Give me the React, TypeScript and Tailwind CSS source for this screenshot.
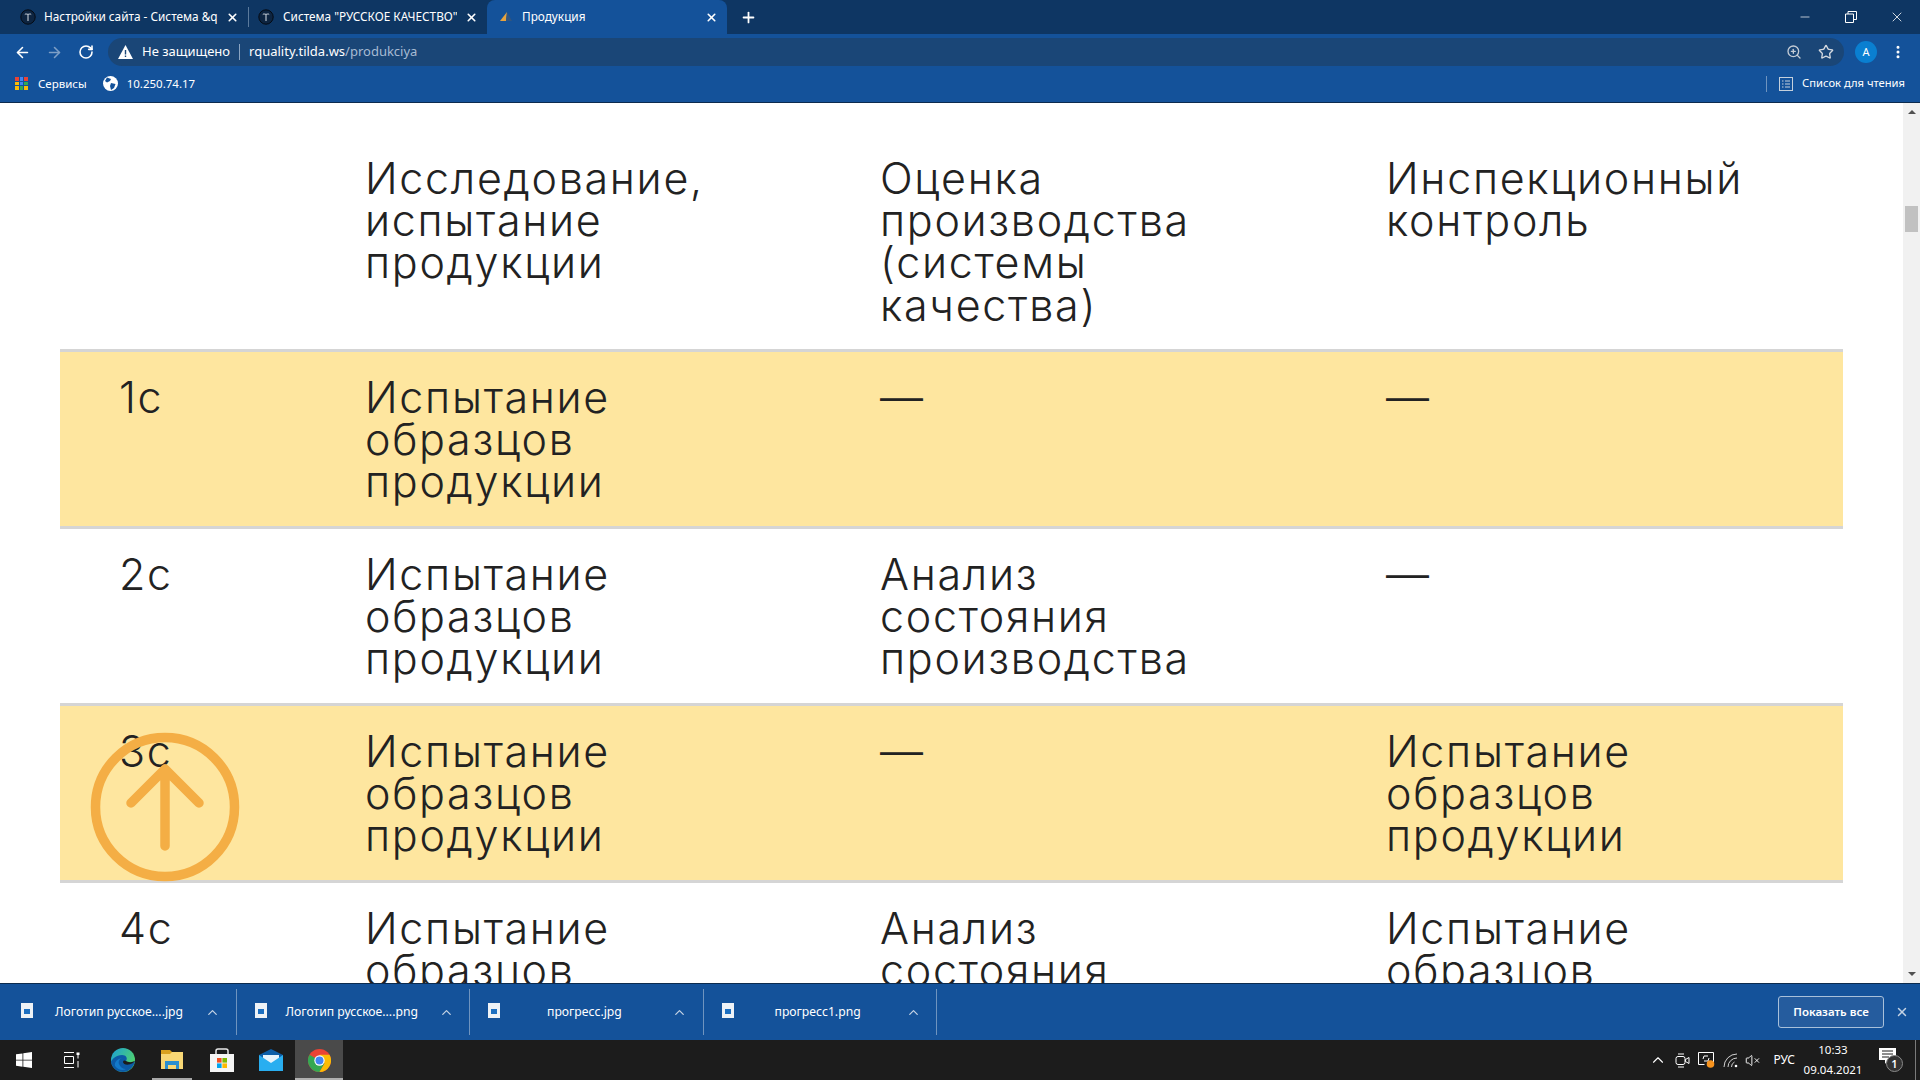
import { ArrowLeft, ArrowRight, RotateCw, ZoomIn, Star, EllipsisVertical, X, Plus, Minus, ChevronUp, VolumeX } from "lucide-react";

const rows = [
  { id: "1c", a: "Испытание образцов продукции", b: "—", c: "—", yellow: true },
  { id: "2c", a: "Испытание образцов продукции", b: "Анализ состояния производства", c: "—", yellow: false },
  { id: "3c", a: "Испытание образцов продукции", b: "—", c: "Испытание образцов продукции", yellow: true },
  { id: "4c", a: "Испытание образцов продукции", b: "Анализ состояния производства", c: "Испытание образцов продукции", yellow: false },
];

const downloads = [
  { name: "Логотип русское....jpg", pad: "pl-[22px]" },
  { name: "Логотип русское....png", pad: "pl-[19px]" },
  { name: "прогресс.jpg", pad: "pl-[47px]" },
  { name: "прогресс1.png", pad: "pl-[41px]" },
];

function TildaIcon() {
  return (
    <svg width="16" height="16" viewBox="0 0 16 16" className="shrink-0">
      <circle cx="8" cy="8" r="7.2" fill="#0d2440" stroke="#050b14" strokeWidth="1" />
      <path d="M4.8 5.5c1-1 2-.2 3.200-.2s2.200-.8 3.200.2M8 5.500V12" stroke="#d7dde5" strokeWidth="1" fill="none" />
    </svg>
  );
}

function Tab({ title, className, titleClass, icon }: { title: string; className: string; titleClass: string; icon: React.ReactNode }) {
  return (
    <div className={`flex items-center h-[34px] shrink-0 ${className}`}>
      {icon}
      <span className={`flex-1 overflow-hidden whitespace-nowrap text-[11.800px] text-white ${titleClass}`}>{title}</span>
      <X className="w-[13px] h-[13px] ml-2 text-white shrink-0" strokeWidth={3} />
    </div>
  );
}

function AppsIcon() {
  const colors = ["#ea4335", "#4285f4", "#ea4335", "#fbbc05", "#4285f4", "#34a853", "#fbbc05", "#34a853", "#fbbc05"];
  return (
    <div className="grid grid-cols-3 gap-[1px] w-[13px] h-[13px]">
      {colors.map((c, i) => (
        <div key={i} style={{ backgroundColor: c }} />
      ))}
    </div>
  );
}

function DownloadItem({ name, pad }: { name: string; pad: string }) {
  return (
    <div className="flex items-center w-[233.500px] h-[46px] pl-[18px] border-r border-[#6f94bf] shrink-0">
      <div className="relative w-[12px] h-[15px] bg-[#eef2f6] -mt-[4px] shrink-0">
        <div className="absolute left-[3px] top-[6px] w-[6px] h-[5px] bg-[#1d6fc0]" />
      </div>
      <span className={`${pad} w-[167px] text-[12.200px] text-white whitespace-nowrap shrink-0`}>{name}</span>
      <ChevronUp className="ml-[5px] w-[15px] h-[15px] text-[#c5d3e4]" strokeWidth={2} />
    </div>
  );
}

export default function App() {
  return (
    <div className="flex flex-col h-screen overflow-hidden bg-white font-['Noto_Sans',sans-serif]">
      {/* tabs */}
      <div className="flex items-center h-[34px] bg-[#0e3663] shrink-0">
        <Tab title="Настройки сайта - Система &qu" className="w-[248px] pl-[20px] pr-[9px]" titleClass="ml-[8px]" icon={<TildaIcon />} />
        <div className="w-px h-[20px] bg-[#5b7a9c] shrink-0" />
        <Tab title={'Система "РУССКОЕ КАЧЕСТВО" -'} className="w-[238px] pl-[9px] pr-[9px]" titleClass="ml-[9px]" icon={<TildaIcon />} />
        <Tab
          title="Продукция"
          className="w-[240px] bg-[#14529a] rounded-t-lg pl-[11px] pr-[9px]"
          titleClass="ml-[8px]"
          icon={
            <svg width="16" height="16" viewBox="0 0 16 16" className="shrink-0">
              <path d="M9 3l-7 9h6z" fill="#e8a33d" />
              <path d="M9 3l5 9H8z" fill="#33557f" />
            </svg>
          }
        />
        <Plus className="ml-[13px] w-[17px] h-[17px] text-white" strokeWidth={2.5} />
        <div className="flex items-center ml-auto text-white">
          <Minus className="w-[14px] h-[14px] mr-[33px]" strokeWidth={1.2} />
          <svg width="12" height="12" viewBox="0 0 12 12" className="mr-[32px]" fill="none" stroke="white">
            <path d="M.5 3h8v8.500h-8zM3 3V.5h8.500v8H8.500" />
          </svg>
          <X className="w-[16px] h-[16px] mr-[15px]" strokeWidth={1.2} />
        </div>
      </div>

      {/* toolbar */}
      <div className="flex items-center h-[36px] bg-[#14529a] shrink-0">
        <ArrowLeft className="ml-[14px] w-[17px] h-[17px] text-white" strokeWidth={2.200} />
        <ArrowRight className="ml-[15px] w-[17px] h-[17px] text-[#7e9fc6]" strokeWidth={2.200} />
        <RotateCw className="ml-[15px] w-[16px] h-[16px] text-white" strokeWidth={2.400} />
        <div className="flex items-center ml-[14px] w-[1736px] h-[28px] rounded-full bg-[#1a4677] text-[13px]">
          <svg width="15" height="14" viewBox="0 0 15 14" className="ml-[10px] shrink-0">
            <path d="M7.500 0L15 14H0z" fill="white" />
            <path d="M6.800 5h1.400v4.500H6.800zM6.800 10.500h1.400V12H6.800z" fill="#1a4677" />
          </svg>
          <span className="ml-[9px] text-white">Не защищено</span>
          <div className="mx-[9px] w-px h-[16px] bg-[#8aa4c2]" />
          <span className="text-white">rquality.tilda.ws</span>
          <span className="text-[#a7bbd3]">/produkciya</span>
          <ZoomIn className="ml-auto w-[16px] h-[16px] text-[#c4ccd6]" />
          <Star className="ml-[16px] mr-[10px] w-[16px] h-[16px] text-[#d4d9df]" strokeWidth={2} />
        </div>
        <div className="flex items-center justify-center ml-[11px] w-[22px] h-[22px] rounded-full bg-[#0a7fd1] text-white text-[11px]">A</div>
        <EllipsisVertical className="ml-[13px] w-[16px] h-[16px] text-white" strokeWidth={2.500} />
      </div>

      {/* bookmarks */}
      <div className="flex items-center h-[33px] pb-[5px] bg-[#14529a] border-b border-[#0c2b4e] shrink-0 text-[11.500px] text-white">
        <div className="ml-[15px]"><AppsIcon /></div>
        <span className="ml-[10px]">Сервисы</span>
        <svg width="15" height="15" viewBox="0 0 15 15" className="ml-[16px]">
          <circle cx="7.500" cy="7.500" r="7.500" fill="white" />
          <path d="M4 1.500l4 1.500-1 2-3 1.500L2 5zM8 7l4.500 1-1.500 4-3 2-1-4z" fill="#14529a" />
        </svg>
        <span className="ml-[9px]">10.250.74.17</span>
        <div className="ml-auto w-px h-[16px] bg-[#6f94bf]" />
        <svg width="14" height="14" viewBox="0 0 14 14" className="ml-[12px]" fill="none" stroke="#c5d0dc">
          <rect x=".5" y=".5" width="13" height="13" />
          <path d="M3 4h1.500M6 4h5M3 7h1.500M6 7h5M3 10h1.500M6 10h5" />
        </svg>
        <span className="ml-[9px] mr-[15px] text-[11.200px]">Список для чтения</span>
      </div>

      {/* page */}
      <div className="relative flex flex-1 min-h-0 overflow-hidden">
        <div className="flex-1 min-w-0 overflow-hidden pl-[60px] pr-[60px] font-['Inter',sans-serif] text-[43px] leading-[42.200px] font-light text-[#222222] tracking-[1.700px]">
          <div className="grid grid-cols-[305px_515px_506px_1fr] pt-[54px] h-[246px]">
            <div />
            <div className="w-[400px]">Исследование, испытание продукции</div>
            <div className="w-[340px]">Оценка производства (системы качества)</div>
            <div className="w-[400px]">Инспекционный контроль</div>
          </div>
          {rows.map((r) => (
            <div
              key={r.id}
              className={`grid grid-cols-[305px_515px_506px_1fr] h-[177px] pt-[24px] border-t-[3px] border-[#d5d5d5] ${r.yellow ? "bg-[#fee69f]" : ""}`}
            >
              <div className="pl-[59px]">{r.id}</div>
              <div className="w-[340px]">{r.a}</div>
              <div className="w-[340px]">{r.b}</div>
              <div className="w-[340px]">{r.c}</div>
            </div>
          ))}
        </div>

        {/* scrollbar */}
        <div className="relative w-[17px] bg-[#f1f1f1] shrink-0 flex flex-col items-center">
          <div className="mt-[7px] w-0 h-0 border-x-[4px] border-x-transparent border-b-[4px] border-b-[#505050]" />
          <div className="mt-[92px] w-[13px] h-[26px] bg-[#c1c1c1]" />
          <div className="mt-auto mb-[7px] w-0 h-0 border-x-[4px] border-x-transparent border-t-[4px] border-t-[#505050]" />
        </div>

        {/* scroll to top button */}
        <svg width="150" height="150" viewBox="0 0 150 150" className="absolute left-[90px] top-[629px]" fill="none" stroke="#f4ae45" strokeWidth="9.500" strokeLinecap="round" strokeLinejoin="round">
          <circle cx="75" cy="75" r="69.500" />
          <path d="M75 114V37M41 71l34-34 34 34" />
        </svg>
      </div>

      {/* downloads */}
      <div className="flex items-center h-[57px] bg-[#14529a] border-t border-[#0c2b4e] shrink-0 pr-[11px]">
        <div className="flex ml-[3px]">
          {downloads.map((d) => (
            <DownloadItem key={d.name} name={d.name} pad={d.pad} />
          ))}
        </div>
        <div className="flex items-center justify-center ml-auto w-[106px] h-[32px] rounded-[3px] border border-[#a8c0da] bg-[#255c9e] text-[11.500px] font-semibold text-white">Показать все</div>
        <X className="ml-[11px] w-[14px] h-[14px] text-[#c5d3e4]" strokeWidth={2.500} />
      </div>

      {/* taskbar */}
      <div className="flex items-center h-[40px] bg-[#1c1c1c] shrink-0 text-white">
        <svg width="16" height="16" viewBox="0 0 16 16" fill="white" className="ml-[16px]">
          <path d="M0 2.300l6.500-.9v6.300H0zM7.300 1.300L16 0v7.700H7.300zM0 8.400h6.500v6.300L0 13.800zM7.300 8.400H16V16l-8.700-1.200z" />
        </svg>
        <svg width="16" height="16" viewBox="0 0 16 16" fill="none" stroke="white" className="ml-[32px]">
          <path d="M0 .5h10M0 15.500h10M.5 4.500h9v7h-9zM14 3v3.500M14 9v6.500" />
          <rect x="12.500" y=".5" width="3" height="2.500" fill="white" stroke="none" />
        </svg>
        <div className="ml-[19px] w-[48px] h-[40px] flex items-center justify-center">
          <svg width="24" height="24" viewBox="0 0 24 24">
            <defs>
              <linearGradient id="edgeTop" x1="0" y1="0" x2="1" y2="0.600">
                <stop offset="0" stopColor="#1a9fd8" />
                <stop offset="1" stopColor="#52d46a" />
              </linearGradient>
            </defs>
            <circle cx="12" cy="12" r="12" fill="url(#edgeTop)" />
            <path d="M24 13c-3 2-7 2-9 0 2-3 0-6-4-6C5 7 1 11 0 14c1 6 6 10 12 10 6 0 11-5 12-11z" fill="#0c5aa6" />
            <path d="M12 10c-3 0-5 3-4 6 1 3 4 5 7 5-3 2-8 1-11-3-1-4 3-8 8-8z" fill="#1379c9" />
            <path d="M15 13c-1.500-1-3-.5-3 1 0 2 3 3 6 2.500 2.500-.5 5-2 6-3.500-3 1.500-7 1.500-9 0z" fill="#1c1c1c" />
          </svg>
        </div>
        <div className="relative w-[50px] h-[40px] flex items-center justify-center">
          <svg width="22" height="20" viewBox="0 0 22 20">
            <path d="M0 0h9l2 2h11v17H0z" fill="#d9a11f" />
            <path d="M0 4h9l2-2h11v17H0z" fill="#f8d775" />
            <path d="M4 11h14v8h-3v-4H7v4H4z" fill="#2a8fd0" />
          </svg>
          <div className="absolute bottom-0 left-[5px] w-[40px] h-[2px] bg-[#a8a8a8]" />
        </div>
        <div className="w-[49px] h-[40px] flex items-center justify-center">
          <svg width="24" height="24" viewBox="0 0 24 24">
            <path d="M6 7V3q0-2 2-2h8q2 0 2 2v4" fill="none" stroke="#e8e8e8" strokeWidth="1.500" />
            <path d="M0 6h24v18H0z" fill="#f5f5f5" />
            <path d="M7 10h4.600v4.600H7z" fill="#f25022" />
            <path d="M12.400 10H17v4.600h-4.600z" fill="#7fba00" />
            <path d="M7 15.400h4.600V20H7z" fill="#00a4ef" />
            <path d="M12.400 15.400H17V20h-4.600z" fill="#ffb900" />
          </svg>
        </div>
        <div className="w-[49px] h-[40px] flex items-center justify-center">
          <svg width="24" height="22" viewBox="0 0 24 22">
            <path d="M0 6l12-6 12 6v16H0z" fill="#0d5fa8" />
            <path d="M4 6h16v8H4z" fill="#e7f4fc" />
            <path d="M0 6l12 8 12-8v16H0z" fill="#29aef0" />
          </svg>
        </div>
        <div className="relative w-[48px] h-[40px] flex items-center justify-center bg-[#4a4a4a]">
          <svg width="23" height="23" viewBox="0 0 24 24">
            <circle cx="12" cy="12" r="12" fill="#ea4335" />
            <path d="M12 12L1.600 6A12 12 0 0 0 12 24l5.200-9z" fill="#34a853" />
            <path d="M12 6h10.400A12 12 0 0 1 12 24l5.200-9z" fill="#fbbc05" />
            <circle cx="12" cy="12" r="5.400" fill="white" />
            <circle cx="12" cy="12" r="4.200" fill="#4285f4" />
          </svg>
          <div className="absolute bottom-0 left-0 w-full h-[2px] bg-[#b0b0b0]" />
        </div>

        <ChevronUp className="ml-auto w-[18px] h-[18px]" strokeWidth={1.500} />
        <svg width="15" height="15" viewBox="0 0 15 15" fill="none" stroke="white" className="ml-[8px]">
          <rect x="1" y="3.500" width="9" height="8" rx="2" />
          <path d="M10.500 6.500l3.500-2v6l-3.500-2zM3 1h6M3 14h6" />
        </svg>
        <svg width="17" height="16" viewBox="0 0 17 16" fill="none" stroke="white" className="ml-[8px]">
          <path d="M.5.500h15v10H9M.5.500v12h6" />
          <path d="M5 7l1-3h4M11 6l-1 3H6" />
          <circle cx="12.500" cy="12" r="3.800" fill="#f7931e" stroke="none" />
        </svg>
        <svg width="15" height="15" viewBox="0 0 15 15" fill="none" stroke="#d0d0d0" className="ml-[8px]">
          <path d="M1 14A13 13 0 0 1 14 1M5 14a9 9 0 0 1 9-9" strokeWidth="1" />
          <path d="M8.500 14a5.500 5.500 0 0 1 3-5" strokeWidth="1" />
          <circle cx="13" cy="13" r="1.300" fill="white" stroke="none" />
        </svg>
        <VolumeX className="ml-[7px] w-[15px] h-[15px]" strokeWidth={1.500} />
        <span className="ml-[13px] text-[12px]">РУС</span>
        <div className="ml-[8px] w-[60px] text-center text-[11.500px] leading-[20px]">
          <div>10:33</div>
          <div>09.04.2021</div>
        </div>
        <div className="relative ml-[16px] mr-[12px] w-[24px] h-[24px]">
          <svg width="17" height="17" viewBox="0 0 17 17" className="absolute left-0 top-0">
            <path d="M0 0h17v12H9l-3 4v-4H0z" fill="white" />
            <path d="M3 3h11M3 6h11M3 9h7" stroke="#1c1c1c" />
          </svg>
          <div className="absolute right-0 bottom-0 flex items-center justify-center w-[17px] h-[17px] rounded-full border border-[#8a8a8a] bg-[#333333] text-[11px] leading-none font-semibold">1</div>
        </div>
        <div className="w-px h-[40px] bg-[#7a7a7a] mr-[4px]" />
      </div>
    </div>
  );
}
